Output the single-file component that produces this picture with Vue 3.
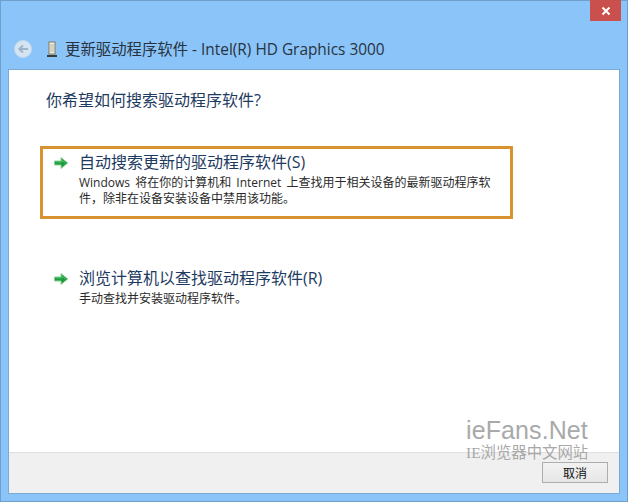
<template>
  <div class="window">
    <button class="close-btn" aria-label="关闭">
      <svg viewBox="0 0 10 10" width="10" height="10">
        <path d="M1.5 1.5l7 7M8.5 1.5l-7 7" stroke="#fff" stroke-width="2" fill="none" />
      </svg>
    </button>

    <div class="title-row">
      <span class="back-btn">
        <svg viewBox="0 0 18 18" width="18" height="18">
          <circle cx="9" cy="9" r="8.5" fill="#d3e4f3" stroke="#c2d9ee" />
          <path d="M14 9H6M9 5.5L5.3 9 9 12.5" stroke="#9fb4c8" stroke-width="2" fill="none" />
        </svg>
      </span>
      <svg class="device-icon" viewBox="0 0 12 16" width="12" height="16">
        <rect x="3" y="1" width="6" height="12" fill="#f3efdc" stroke="#7d7a68" />
        <path d="M5 3v8M7 3v8" stroke="#b9b59c" />
        <path d="M1 15h10" stroke="#3d3d38" stroke-width="2" />
      </svg>
      <span class="title">更新驱动程序软件 - Intel(R) HD Graphics 3000</span>
    </div>

    <div class="panel">
      <div class="content">
        <h1 class="question">你希望如何搜索驱动程序软件?</h1>

        <div class="options">
          <div v-for="opt in options" :key="opt.title" class="option" :class="{ active: opt.active }">
            <svg class="arrow" viewBox="0 0 16 14" width="16" height="14">
              <path d="M1.5 5h6.5V1.5L14.8 7 8 12.5V9H1.5z" fill="#1f9a3c" stroke="#8fd49c" stroke-width="1" />
              <path d="M3 6h6V4l3 3" stroke="#43c060" stroke-width="1" fill="none" />
            </svg>
            <div class="option-text">
              <div class="option-title">{{ opt.title }}</div>
              <div class="option-desc">{{ opt.desc }}</div>
            </div>
          </div>
        </div>
      </div>

      <div class="footer">
        <button class="cancel">取消</button>
      </div>
    </div>

    <div class="watermark">
      <div class="wm-en">ieFans.Net</div>
      <div class="wm-cn">IE浏览器中文网站</div>
    </div>
  </div>
</template>

<script setup>
const options = [
  {
    title: '自动搜索更新的驱动程序软件(S)',
    desc: 'Windows 将在你的计算机和 Internet 上查找用于相关设备的最新驱动程序软\n件，除非在设备安装设备中禁用该功能。',
    active: true
  },
  {
    title: '浏览计算机以查找驱动程序软件(R)',
    desc: '手动查找并安装驱动程序软件。',
    active: false
  }
]
</script>

<style>
html, body {
  margin: 0;
  background: #8bc4f8;
}
</style>

<style scoped>
.window {
  position: relative;
  box-sizing: border-box;
  width: 628px;
  height: 502px;
  display: flex;
  flex-direction: column;
  padding: 0 7px 7px;
  background: #8bc4f8;
  border: 1px solid #6f9fcc;
  font-family: "Open Sans", "Noto Sans CJK SC", sans-serif;
  color: #1c1c1c;
}

.close-btn {
  position: absolute;
  top: -1px;
  right: 6px;
  width: 31px;
  height: 21px;
  padding: 0;
  border: 0;
  display: flex;
  align-items: center;
  justify-content: center;
  background: #c9504c;
}

.title-row {
  height: 68px;
  flex: none;
  display: flex;
  align-items: center;
  padding: 27px 0 0 6px;
  box-sizing: border-box;
}

.back-btn {
  display: flex;
  width: 18px;
  height: 18px;
  margin-top: 1px;
}

.device-icon {
  margin-left: 14px;
}

.title {
  margin-left: 7px;
  font-size: 15.4px;
  color: #27333f;
  white-space: nowrap;
}

.panel {
  flex: 1;
  display: flex;
  flex-direction: column;
  background: #fff;
  border: 1px solid #7ba9d6;
}

.content {
  flex: 1;
  padding: 18px 0 0 37px;
}

.question {
  margin: 0;
  font-size: 16px;
  font-weight: 400;
  line-height: 24px;
  color: #1d3a5f;
}

.options {
  margin: 34px 0 0 -6px;
  display: flex;
  flex-direction: column;
  gap: 43px;
}

.option {
  box-sizing: border-box;
  width: 473px;
  min-height: 73px;
  display: flex;
  align-items: flex-start;
  padding: 1px 12px 0 10px;
  border: 3px solid transparent;
}

.option.active {
  border-color: #d8922f;
}

.arrow {
  flex: none;
  margin-top: 6px;
}

.option-text {
  margin-left: 10px;
}

.option-title {
  font-size: 16px;
  line-height: 24px;
  color: #1d3a5f;
  white-space: nowrap;
}

.option-desc {
  margin-top: 1px;
  font-size: 12px;
  line-height: 16px;
  word-spacing: 2px;
  white-space: pre-line;
  color: #2a2a2a;
}

.footer {
  flex: none;
  height: 41px;
  box-sizing: border-box;
  display: flex;
  justify-content: flex-end;
  align-items: center;
  padding: 0 11px 2px 0;
  background: #f0f0f0;
  border-top: 1px solid #dfdfdf;
}

.cancel {
  width: 66px;
  height: 21px;
  padding: 0;
  border: 1px solid #adadad;
  background: linear-gradient(#f2f2f2, #e6e6e6);
  font-family: "Noto Sans CJK SC", sans-serif;
  font-size: 12px;
  line-height: 19px;
  color: #111;
}

.watermark {
  position: absolute;
  top: 415px;
  left: 465px;
  width: 130px;
  pointer-events: none;
  color: #a9a9a9;
}

.wm-en {
  font-family: "Liberation Sans", sans-serif;
  font-size: 25px;
  line-height: 28px;
  letter-spacing: 0.1px;
}

.wm-cn {
  font-family: "Liberation Serif", "Noto Sans CJK SC", sans-serif;
  font-size: 15.4px;
  line-height: 18px;
  white-space: nowrap;
}
</style>
